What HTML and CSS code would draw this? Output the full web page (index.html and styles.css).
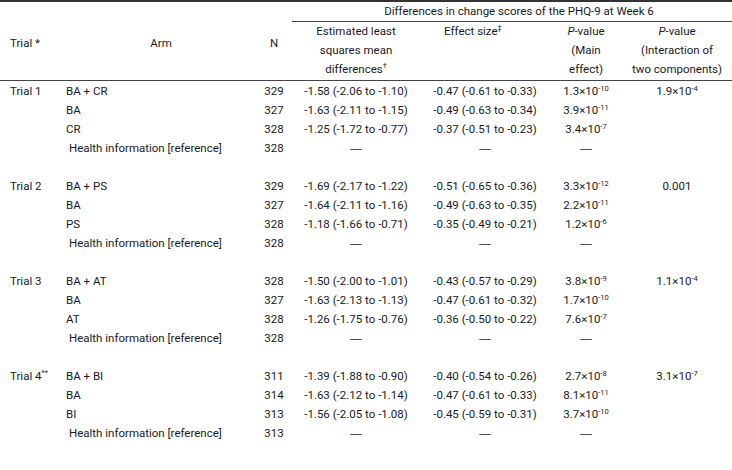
FILE: index.html
```html
<!DOCTYPE html>
<html>
<head>
<meta charset="utf-8">
<link rel="stylesheet" href="styles.css">
</head>
<body>
<table class="results">
  <colgroup>
    <col class="c-trial"><col class="c-arm"><col class="c-n"><col class="c-est"><col class="c-eff"><col class="c-pm"><col class="c-pi">
  </colgroup>
  <thead>
    <tr class="h1">
      <th class="trial" rowspan="2">Trial *</th>
      <th class="arm" rowspan="2">Arm</th>
      <th class="n" rowspan="2">N</th>
      <th class="span" colspan="4">Differences in change scores of the PHQ-9 at Week 6</th>
    </tr>
    <tr class="h2">
      <th>Estimated least<br>squares mean<br>differences<sup class="mark">†</sup></th>
      <th class="eff">Effect size<sup class="mark">‡</sup><br>&nbsp;<br>&nbsp;</th>
      <th><i>P</i>-value<br>(Main<br>effect)</th>
      <th><i>P</i>-value<br>(Interaction of<br>two components)</th>
    </tr>
  </thead>
  <tbody>
    <tr><td class="trial">Trial 1</td><td class="arm">BA + CR</td><td class="n">329</td><td>-1.58 (-2.06 to -1.10)</td><td>-0.47 (-0.61 to -0.33)</td><td>1.3×10<sup>-10</sup></td><td>1.9×10<sup>-4</sup></td></tr>
    <tr><td></td><td class="arm">BA</td><td class="n">327</td><td>-1.63 (-2.11 to -1.15)</td><td>-0.49 (-0.63 to -0.34)</td><td>3.9×10<sup>-11</sup></td><td></td></tr>
    <tr><td></td><td class="arm">CR</td><td class="n">328</td><td>-1.25 (-1.72 to -0.77)</td><td>-0.37 (-0.51 to -0.23)</td><td>3.4×10<sup>-7</sup></td><td></td></tr>
    <tr><td></td><td class="arm ref">Health information [reference]</td><td class="n">328</td><td><span class="dash">—</span></td><td><span class="dash">—</span></td><td><span class="dash">—</span></td><td></td></tr>
    <tr class="gap"><td colspan="7"></td></tr>

    <tr><td class="trial">Trial 2</td><td class="arm">BA + PS</td><td class="n">329</td><td>-1.69 (-2.17 to -1.22)</td><td>-0.51 (-0.65 to -0.36)</td><td>3.3×10<sup>-12</sup></td><td>0.001</td></tr>
    <tr><td></td><td class="arm">BA</td><td class="n">327</td><td>-1.64 (-2.11 to -1.16)</td><td>-0.49 (-0.63 to -0.35)</td><td>2.2×10<sup>-11</sup></td><td></td></tr>
    <tr><td></td><td class="arm">PS</td><td class="n">328</td><td>-1.18 (-1.66 to -0.71)</td><td>-0.35 (-0.49 to -0.21)</td><td>1.2×10<sup>-6</sup></td><td></td></tr>
    <tr><td></td><td class="arm ref">Health information [reference]</td><td class="n">328</td><td><span class="dash">—</span></td><td><span class="dash">—</span></td><td><span class="dash">—</span></td><td></td></tr>
    <tr class="gap"><td colspan="7"></td></tr>

    <tr><td class="trial">Trial 3</td><td class="arm">BA + AT</td><td class="n">328</td><td>-1.50 (-2.00 to -1.01)</td><td>-0.43 (-0.57 to -0.29)</td><td>3.8×10<sup>-9</sup></td><td>1.1×10<sup>-4</sup></td></tr>
    <tr><td></td><td class="arm">BA</td><td class="n">327</td><td>-1.63 (-2.13 to -1.13)</td><td>-0.47 (-0.61 to -0.32)</td><td>1.7×10<sup>-10</sup></td><td></td></tr>
    <tr><td></td><td class="arm">AT</td><td class="n">328</td><td>-1.26 (-1.75 to -0.76)</td><td>-0.36 (-0.50 to -0.22)</td><td>7.6×10<sup>-7</sup></td><td></td></tr>
    <tr><td></td><td class="arm ref">Health information [reference]</td><td class="n">328</td><td><span class="dash">—</span></td><td><span class="dash">—</span></td><td><span class="dash">—</span></td><td></td></tr>
    <tr class="gap"><td colspan="7"></td></tr>

    <tr><td class="trial">Trial 4<sup class="mark">**</sup></td><td class="arm">BA + BI</td><td class="n">311</td><td>-1.39 (-1.88 to -0.90)</td><td>-0.40 (-0.54 to -0.26)</td><td>2.7×10<sup>-8</sup></td><td>3.1×10<sup>-7</sup></td></tr>
    <tr><td></td><td class="arm">BA</td><td class="n">314</td><td>-1.63 (-2.12 to -1.14)</td><td>-0.47 (-0.61 to -0.33)</td><td>8.1×10<sup>-11</sup></td><td></td></tr>
    <tr><td></td><td class="arm">BI</td><td class="n">313</td><td>-1.56 (-2.05 to -1.08)</td><td>-0.45 (-0.59 to -0.31)</td><td>3.7×10<sup>-10</sup></td><td></td></tr>
    <tr><td></td><td class="arm ref">Health information [reference]</td><td class="n">313</td><td><span class="dash">—</span></td><td><span class="dash">—</span></td><td><span class="dash">—</span></td><td></td></tr>
    <tr class="gap last"><td colspan="7"></td></tr>
  </tbody>
</table>
</body>
</html>
```
FILE: styles.css
```css
html, body {
  margin: 0;
  padding: 0;
  background: #ffffff;
}
body {
  font-family: Roboto, "Liberation Sans", sans-serif;
  font-size: 11.5px;
  color: #1a1a1a;
}
.results {
  width: 732px;
  table-layout: fixed;
  border-collapse: collapse;
  border-top: 2px solid #333333;
  border-bottom: 2px solid #333333;
}
.c-trial { width: 60px; }
.c-arm { width: 196px; }
.c-n { width: 36px; }
.c-est { width: 128px; }
.c-eff { width: 130px; }
.c-pm { width: 72px; }
.c-pi { width: 110px; }

th {
  font-weight: normal;
  padding: 0;
  line-height: 19px;
  text-align: center;
  vertical-align: middle;
}
.h1 th.span {
  height: 19px;
  border-bottom: 1px solid #444444;
  padding-left: 14px;
}
.h2 th {
  border-bottom: 1px solid #444444;
  padding-bottom: 1px;
}
th.trial, th.arm, th.n {
  border-bottom: 1px solid #444444;
  padding-top: 4px;
}
th.trial {
  text-align: left;
  padding-left: 10px;
}
th.arm {
  padding-left: 6px;
}
th.eff {
  padding-right: 24px;
}
td {
  padding: 0;
  height: 19px;
  line-height: 19px;
  text-align: center;
  white-space: nowrap;
  vertical-align: middle;
}
td.trial {
  text-align: left;
  padding-left: 10px;
}
td.arm {
  text-align: left;
  padding-left: 6px;
}
td.arm.ref {
  padding-left: 9px;
}
.dash {
  font-family: "Liberation Sans", sans-serif;
}
tbody tr:first-child td {
  padding-top: 1px;
}
.gap td {
  height: 19px;
}
.gap.last td {
  height: 28px;
}
sup {
  font-size: 7.5px;
  line-height: 0;
  vertical-align: 4px;
}
.mark {
  font-size: 7.5px;
  vertical-align: 5px;
}
```
